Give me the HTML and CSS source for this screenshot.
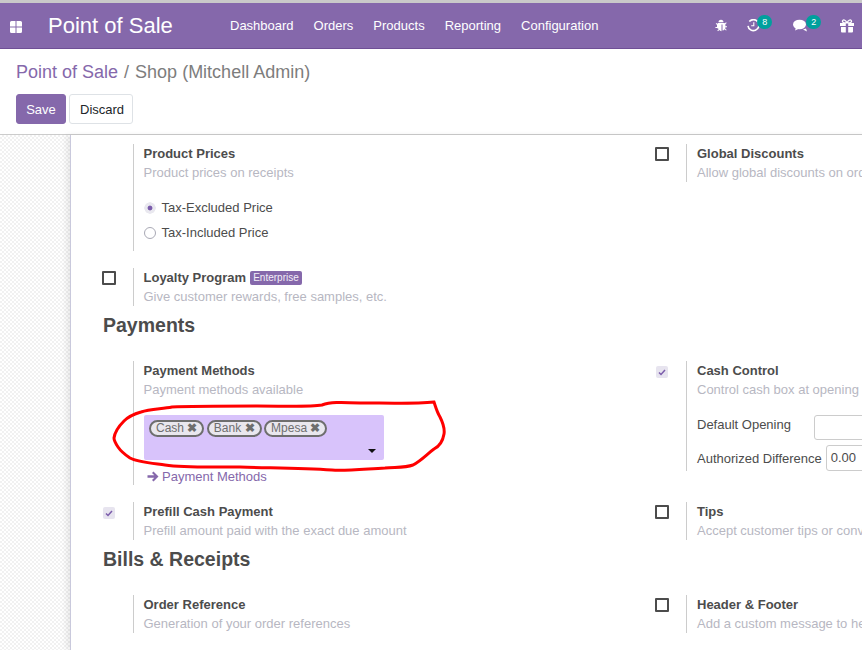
FILE: index.html
```html
<!DOCTYPE html>
<html lang="en">
<head>
  <meta charset="UTF-8">
  <title>Point of Sale</title>
  <link rel="stylesheet" href="styles.css">
</head>
<body>
  <header class="navbar">
    <svg class="apps-icon" width="12" height="12" viewBox="0 0 12 12"><path d="M1.500 0h4v5.500H0V1.500A1.500 1.500 0 0 1 1.500 0zM6.500 0h4A1.500 1.500 0 0 1 12 1.500v4H6.500zM0 6.500h5.500V12h-4A1.500 1.500 0 0 1 0 10.500zM6.500 6.500H12v4a1.500 1.500 0 0 1-1.500 1.500h-4z" fill="#fff"/></svg>
    <div class="brand">Point of Sale</div>
    <nav class="menu">
      <a>Dashboard</a>
      <a>Orders</a>
      <a>Products</a>
      <a>Reporting</a>
      <a>Configuration</a>
    </nav>
    <div class="systray">
      <svg class="tray-bug" width="12" height="13" viewBox="0 0 12 13"><path d="M3.500 3.200a2.500 2.500 0 0 1 5 0zM2.800 4h6.400l.8 .2 1-1 .7 .7-1.300 1.300v2h1.600v1h-1.600l-.2 1.200 1.500 1.500-.7 .7-1.300-1.300c-.6 .7-1.400 1.200-2.200 1.300V5.500h-1V12.300c-.8-.1-1.600-.6-2.200-1.300l-1.300 1.300-.7-.7 1.500-1.500L2 8.900H.4v-1H2v-2L.7 4.600l.7-.7 1 1z" fill="#fff"/></svg>
      <span class="tray-item tray-clock">
        <svg width="13" height="13" viewBox="0 0 13 13"><path d="M2.300 2.500A5.500 5.500 0 1 1 1 6.800" fill="none" stroke="#fff" stroke-width="1.600"/><path d="M6.800 3.200v3.600H4.200" fill="none" stroke="#fff" stroke-width="1.100"/></svg>
        <b class="badge">8</b>
      </span>
      <span class="tray-item tray-chat">
        <svg width="15" height="14" viewBox="0 0 15 14"><ellipse cx="6.500" cy="5.500" rx="6.500" ry="4.800" fill="#fff"/><path d="M3 8.500 2 11.500 6.500 9.500zM10 10.500l4 2-1-3z" fill="#fff"/></svg>
        <b class="badge">2</b>
      </span>
      <svg class="tray-gift" width="14" height="14" viewBox="0 0 14 14"><path d="M0 4h5.800v3H0zM8.200 4H14v3H8.200zM1 8h4.800v5.500H2a1 1 0 0 1-1-1zM8.200 8H13v4.500a1 1 0 0 1-1 1H8.200z" fill="#fff"/><path d="M7 3.800C5.500 1 3.800 .6 3 1.200c-1 .8-.3 2.600 1 2.600zM7 3.800C8.500 1 10.200 .6 11 1.200c1 .8 .3 2.600-1 2.600z" fill="none" stroke="#fff" stroke-width="1.300"/></svg>
    </div>
  </header>

  <section class="control-panel">
    <div class="breadcrumb"><a>Point of Sale</a><span class="sep">/</span><span>Shop (Mitchell Admin)</span></div>
    <div class="buttons">
      <button class="btn btn-primary">Save</button>
      <button class="btn">Discard</button>
    </div>
  </section>

  <main class="content">
    <div class="sheet">
      <div class="row">
        <div class="setting">
          <div class="box"></div>
          <div class="body">
            <div class="label">Product Prices</div>
            <div class="muted">Product prices on receipts</div>
            <div class="radios">
              <div class="radio-line"><i class="radio radio-on"></i>Tax-Excluded Price</div>
              <div class="radio-line"><i class="radio"></i>Tax-Included Price</div>
            </div>
          </div>
        </div>
        <div class="setting">
          <div class="box"><i class="check"></i></div>
          <div class="body">
            <div class="label">Global Discounts</div>
            <div class="muted">Allow global discounts on orders</div>
          </div>
        </div>
      </div>

      <div class="row">
        <div class="setting">
          <div class="box"><i class="check"></i></div>
          <div class="body">
            <div class="label">Loyalty Program <span class="tag">Enterprise</span></div>
            <div class="muted">Give customer rewards, free samples, etc.</div>
          </div>
        </div>
      </div>

      <h2 class="section-title">Payments</h2>

      <div class="row">
        <div class="setting">
          <div class="box"></div>
          <div class="body">
            <div class="label">Payment Methods</div>
            <div class="muted">Payment methods available</div>
            <div class="many2many">
              <span class="chip">Cash <b>✖</b></span>
              <span class="chip">Bank <b>✖</b></span>
              <span class="chip">Mpesa <b>✖</b></span>
              <i class="caret"></i>
            </div>
            <a class="link"><svg width="12" height="11" viewBox="0 0 12 11"><path d="M6.500 .5 11.500 5.500 6.500 10.500 5 9 7.300 6.800H.5V4.200h6.800L5 2z" fill="#8568ab"/></svg>Payment Methods</a>
          </div>
        </div>
        <div class="setting">
          <div class="box"><i class="check check-on"><svg width="8" height="7" viewBox="0 0 8 7"><path d="M1 3.500 3 5.500 7 1" fill="none" stroke="#7b5cab" stroke-width="1.500"/></svg></i></div>
          <div class="body">
            <div class="label">Cash Control</div>
            <div class="muted">Control cash box at opening</div>
            <div class="field field-opening"><span>Default Opening</span><i class="input"></i></div>
            <div class="field"><span>Authorized Difference</span><i class="input">0.00</i></div>
          </div>
        </div>
      </div>

      <div class="row">
        <div class="setting">
          <div class="box"><i class="check check-on"><svg width="8" height="7" viewBox="0 0 8 7"><path d="M1 3.500 3 5.500 7 1" fill="none" stroke="#7b5cab" stroke-width="1.500"/></svg></i></div>
          <div class="body">
            <div class="label">Prefill Cash Payment</div>
            <div class="muted">Prefill amount paid with the exact due amount</div>
          </div>
        </div>
        <div class="setting">
          <div class="box"><i class="check"></i></div>
          <div class="body">
            <div class="label">Tips</div>
            <div class="muted">Accept customer tips or convert their change</div>
          </div>
        </div>
      </div>

      <h2 class="section-title">Bills &amp; Receipts</h2>

      <div class="row">
        <div class="setting">
          <div class="box"></div>
          <div class="body">
            <div class="label">Order Reference</div>
            <div class="muted">Generation of your order references</div>
          </div>
        </div>
        <div class="setting">
          <div class="box"><i class="check"></i></div>
          <div class="body">
            <div class="label">Header &amp; Footer</div>
            <div class="muted">Add a custom message to header and footer</div>
          </div>
        </div>
      </div>
    </div>
  </main>

  <!-- red marker drawn over the screenshot -->
  <svg class="scribble" width="862" height="650" viewBox="0 0 862 650"><path d="M114 438C115 430 120 425 124 421C129 416 134 414 141 412C150 409 162 409 172 407C190 406 225 406 257 406C285 406 310 407 322 405C330 402 340 402 360 403C385 403 415 404 434 402C436 408 437 412 440 417C443 423 445 428 444 434C443 440 440 446 434 449C427 454 422 460 413 465C405 468 395 467 385 468C365 469 345 471 332 470C300 468 270 468 240 467C210 467 185 468 165 465C150 463 137 462 130 458C124 454 120 450 118 447C116 444 114 441 114 438Z" fill="none" stroke="#f00" stroke-width="3"/></svg>
</body>
</html>
```

FILE: styles.css
```css
* {
  box-sizing: border-box;
}

html, body {
  height: 650px;
}

body {
  margin: 0;
  overflow: hidden;
  position: relative;
  display: flex;
  flex-direction: column;
  border-top: 3px solid #c9c9c9;
  background: #fff;
  color: #4c4c4c;
  font-family: "Liberation Sans", Arial, sans-serif;
  font-size: 13px;
}

/* top bar */
.navbar {
  flex: none;
  display: flex;
  align-items: center;
  height: 46px;
  padding-left: 10px;
  background: #8568ab;
  border-bottom: 1px solid #6f4f96;
  color: #fff;
}

.apps-icon {
  flex: none;
  margin-top: 2px;
}

.brand {
  width: 182px;
  margin-left: 26px;
  font-size: 22px;
  white-space: nowrap;
}

.menu {
  display: flex;
  gap: 20px;
  font-size: 13px;
  white-space: nowrap;
}

.systray {
  display: flex;
  align-items: center;
  margin-left: 117px;
}

.tray-bug {
  margin-right: 20px;
}

.tray-item {
  position: relative;
  display: flex;
}

.tray-clock {
  width: 46px;
}

.tray-chat {
  width: 47px;
}

.badge {
  position: absolute;
  top: -4px;
  width: 15px;
  height: 14px;
  border-radius: 7px;
  background: #00a09d;
  color: #fff;
  font-size: 9px;
  font-weight: 400;
  line-height: 14px;
  text-align: center;
}

.tray-clock .badge {
  left: 10px;
}

.tray-chat .badge {
  left: 13px;
}

/* breadcrumb and buttons */
.control-panel {
  flex: none;
  height: 86px;
  padding: 12px 16px 0;
  border-bottom: 1px solid #ccc;
}

.breadcrumb {
  font-size: 18px;
  line-height: 22px;
  color: #7d7d7d;
}

.breadcrumb a {
  color: #8568ab;
}

.sep {
  margin: 0 6px;
}

.buttons {
  display: flex;
  gap: 3px;
  margin-top: 11px;
}

.btn {
  height: 30px;
  padding: 0 8px 0 10px;
  border: 1px solid #dee2e6;
  border-radius: 3px;
  background: #fff;
  color: #212529;
  font: 13px "Liberation Sans", Arial, sans-serif;
}

.btn-primary {
  width: 50px;
  padding: 0;
  border-color: #8568ab;
  background: #8568ab;
  color: #fff;
}

/* form sheet on the dotted backdrop */
.content {
  flex: 1;
  min-height: 0;
  padding-left: 70px;
  background-color: #fbfbfb;
  background-image: repeating-conic-gradient(#f1f1f1 0 25%, #fff 0 50%);
  background-size: 4px 4px;
}

.sheet {
  width: 1200px;
  height: 100%;
  padding-top: 9px;
  background: #fff;
  border-left: 1px solid #c9c9dc;
  box-shadow: -4px 0 5px rgba(0, 0, 0, .07);
}

.row {
  display: flex;
  align-items: flex-start;
  margin-bottom: 7px;
}

.row + .row {
  margin-top: 17px;
}

.setting {
  display: flex;
  flex: none;
  width: 553px;
}

.box {
  flex: none;
  display: flex;
  align-items: flex-start;
  width: 62px;
  padding: 3px 0 0 31px;
}

.body {
  flex: 1;
  padding-left: 10px;
  border-left: 1px solid #ccc;
}

.setting:first-child .label,
.setting:first-child .muted {
  margin-left: -.5px;
}

.label {
  height: 19px;
  font-weight: 700;
  line-height: 19px;
  white-space: nowrap;
}

.muted {
  height: 19px;
  color: #b7b7c2;
  line-height: 19px;
  white-space: nowrap;
}

.check {
  flex: none;
  display: flex;
  align-items: center;
  justify-content: center;
  width: 14px;
  height: 14px;
  border: 2px solid #4c4c4c;
  border-radius: 1px;
}

.check-on {
  width: 12px;
  height: 12px;
  margin: 2px 0 0 1px;
  border: 0;
  border-radius: 2px;
  background: #e7e4ef;
}

.radios {
  padding: 13px 0 6px;
}

.radio-line {
  display: flex;
  align-items: center;
  height: 25px;
}

.radio {
  display: flex;
  width: 12px;
  height: 12px;
  margin-right: 5.500px;
  border: 1px solid #a9a9b5;
  border-radius: 50%;
}

.radio-on {
  border: 0;
  background: radial-gradient(circle, #7b5cab 0 2px, #e9e8ef 2.800px 5.500px, transparent 6px);
}

.tag {
  display: inline-block;
  height: 14px;
  padding: 0 3.500px;
  border-radius: 2px;
  background: #8568ab;
  color: #f2eef7;
  font-size: 10px;
  font-weight: 400;
  line-height: 14px;
  vertical-align: 1px;
}

.many2many {
  position: relative;
  display: flex;
  align-items: flex-start;
  gap: 2.500px;
  width: 240px;
  height: 45px;
  margin-top: 16px;
  padding: 5px;
  border-radius: 2px;
  background: #d8c3fb;
}

.chip {
  height: 17px;
  padding: 0 5px;
  border: 2px solid #6e6e6e;
  border-radius: 9px;
  background: #e9e7ee;
  color: #6e6e6e;
  font-size: 12px;
  line-height: 13px;
  white-space: nowrap;
}

.chip b {
  font-size: 12px;
}

.caret {
  position: absolute;
  right: 8px;
  bottom: 7px;
  border-style: solid;
  border-width: 4px 4px 0;
  border-color: #111 transparent transparent;
}

.link {
  display: flex;
  align-items: flex-start;
  gap: 3px;
  height: 25px;
  padding: 9px 0 0 3px;
  color: #8568ab;
  line-height: 15px;
  white-space: nowrap;
}

.link svg {
  margin-top: 2px;
}

.field {
  display: flex;
  align-items: center;
  gap: 4px;
  height: 26px;
  margin-top: 5px;
  white-space: nowrap;
}

.field-opening {
  align-items: flex-start;
  gap: 23px;
  height: 25px;
  margin-top: 16px;
  line-height: 19px;
}

.input {
  display: block;
  flex: none;
  width: 120px;
  height: 100%;
  padding-left: 4px;
  border: 1px solid #ccc;
  border-radius: 3px;
  font-style: normal;
  line-height: 24px;
}

.section-title {
  margin: 0 0 24px 32px;
  font-size: 19.500px;
  font-weight: 700;
  line-height: 24px;
  color: #4c4c4c;
}

/* red marker over the many2many field */
.scribble {
  position: absolute;
  left: 0;
  top: -3px;
  pointer-events: none;
}
```
